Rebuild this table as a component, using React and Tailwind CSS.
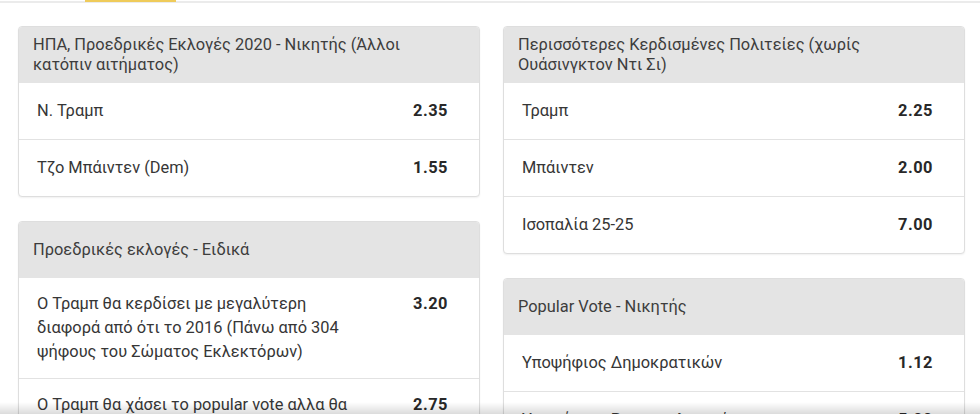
import React from 'react';

const leftMarkets = [
  {
    title: 'ΗΠΑ, Προεδρικές Εκλογές 2020 - Νικητής (Άλλοι κατόπιν αιτήματος)',
    rows: [
      { name: 'Ν. Τραμπ', odds: '2.35' },
      { name: 'Τζο Μπάιντεν (Dem)', odds: '1.55' },
    ],
  },
  {
    title: 'Προεδρικές εκλογές - Ειδικά',
    rows: [
      {
        name: 'Ο Τραμπ θα κερδίσει με μεγαλύτερη διαφορά από ότι το 2016 (Πάνω από 304 ψήφους του Σώματος Εκλεκτόρων)',
        odds: '3.20',
        multi: true,
      },
      { name: 'Ο Τραμπ θα χάσει το popular vote αλλα θα κερδίσει τις εκλογές', odds: '2.75', multi: true },
    ],
  },
];

const rightMarkets = [
  {
    title: 'Περισσότερες Κερδισμένες Πολιτείες (χωρίς Ουάσινγκτον Ντι Σι)',
    rows: [
      { name: 'Τραμπ', odds: '2.25' },
      { name: 'Μπάιντεν', odds: '2.00' },
      { name: 'Ισοπαλία 25-25', odds: '7.00' },
    ],
  },
  {
    title: 'Popular Vote - Νικητής',
    rows: [
      { name: 'Υποψήφιος Δημοκρατικών', odds: '1.12' },
      { name: 'Υποψήφιος Ρεπουμπλικανών', odds: '5.00' },
    ],
  },
];

function MarketCard({ market }) {
  return (
    <div className="rounded-[4px] border border-[#dedede] bg-white shadow-[0_1px_2px_rgba(0,0,0,0.06)] overflow-hidden">
      <div className="bg-[#e4e4e4] min-h-[56px] flex items-center px-[14px] py-[7px] text-[16.4px] leading-[20px] text-[#3d3d3d]">
        <span className="pr-[40px]">{market.title}</span>
      </div>
      {market.rows.map((row, i) => (
        <div
          key={row.name}
          className={
            'flex items-start justify-between pl-[18px] pr-[31px] text-[16.4px] leading-[24px] ' +
            (row.multi ? 'py-[14px] ' : 'py-[16px] ') +
            (i > 0 ? 'border-t border-[#e2e2e2]' : '')
          }
        >
          <span className="text-[#363636] max-w-[334px]">{row.name}</span>
          <span className="font-bold text-[#282828] tracking-[0.5px]">{row.odds}</span>
        </div>
      ))}
    </div>
  );
}

export default function App() {
  return (
    <div
      className="relative w-[980px] h-[414px] overflow-hidden bg-white"
      style={{ fontFamily: 'Roboto, "Noto Sans", sans-serif' }}
    >
      {/* top tab strip */}
      <div className="relative h-[3px] border-b-2 border-[#ebebeb]">
        <div className="absolute left-[85px] top-0 w-[91px] h-[2px] bg-[#efcb5a]" />
      </div>

      <div className="flex gap-[23px] pl-[18px] pr-[15px] pt-[23px]">
        <div className="w-[462px] flex flex-col gap-[24px]">
          {leftMarkets.map((m) => (
            <MarketCard key={m.title} market={m} />
          ))}
        </div>
        <div className="w-[462px] flex flex-col gap-[24px]">
          {rightMarkets.map((m) => (
            <MarketCard key={m.title} market={m} />
          ))}
        </div>
      </div>

      {/* bottom fade */}
      <div className="absolute left-0 right-0 bottom-0 h-[12px] bg-gradient-to-b from-transparent to-[rgba(0,0,0,0.14)]" />
    </div>
  );
}
